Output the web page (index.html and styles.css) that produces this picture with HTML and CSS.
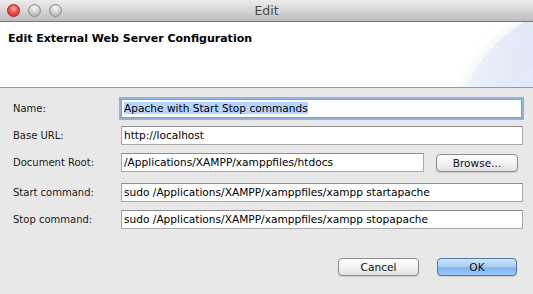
FILE: index.html
```html
<!DOCTYPE html>
<html lang="en">
<head>
    <meta charset="UTF-8">
    <title>Edit</title>
    <link rel="stylesheet" href="styles.css">
</head>
<body>
    <div class="window">
        <div class="titlebar">
            <div class="lights">
                <span class="light close"></span>
                <span class="light"></span>
                <span class="light"></span>
            </div>
            <div class="title">Edit</div>
        </div>

        <header class="banner">
            <h1>Edit External Web Server Configuration</h1>
        </header>

        <div class="content">
            <div class="row">
                <label class="label">Name:</label>
                <div class="field focused"><span class="selected">Apache with Start Stop commands</span></div>
            </div>
            <div class="row">
                <label class="label">Base URL:</label>
                <div class="field">http://localhost</div>
            </div>
            <div class="row row-wide">
                <label class="label">Document Root:</label>
                <div class="field">/Applications/XAMPP/xamppfiles/htdocs</div>
                <button class="btn browse">Browse...</button>
            </div>
            <div class="row row-after">
                <label class="label">Start command:</label>
                <div class="field">sudo /Applications/XAMPP/xamppfiles/xampp startapache</div>
            </div>
            <div class="row">
                <label class="label">Stop command:</label>
                <div class="field">sudo /Applications/XAMPP/xamppfiles/xampp stopapache</div>
            </div>

            <div class="actions">
                <button class="btn">Cancel</button>
                <button class="btn primary">OK</button>
            </div>
        </div>
    </div>
</body>
</html>
```

FILE: styles.css
```css
body {
    margin: 0;
    font-family: 'DejaVu Sans', 'Liberation Sans', sans-serif;
    color: #000;
}

.window {
    width: 533px;
    height: 294px;
    background: #e8e8e8;
    overflow: hidden;
}

/* title bar */
.titlebar {
    height: 21px;
    border-bottom: 1px solid #7a7a7a;
    background: linear-gradient(#ececec 0%, #d6d6d6 50%, #bdbdbd 100%);
    display: flex;
    align-items: center;
    position: relative;
}

.lights {
    display: flex;
    gap: 8px;
    padding-left: 7px;
}

.light {
    width: 13px;
    height: 13px;
    border-radius: 50%;
    border: 0.5px solid #8e8e8e;
    background: radial-gradient(circle at 50% 30%, #fbfbfb 0%, #d2d2d2 45%, #a9a9a9 100%);
    box-sizing: border-box;
}

.light.close {
    border-color: #a3262b;
    background: radial-gradient(circle at 50% 35%, #ffb3ad 0%, #f1514a 45%, #c9231f 100%);
}

.title {
    position: absolute;
    left: 0;
    right: 0;
    text-align: center;
    font-size: 12.5px;
    color: #4a4a4a;
    pointer-events: none;
}

/* banner */
.banner {
    position: relative;
    height: 66px;
    border-bottom: 1px solid #9a9a9a;
    background: #fff;
    box-sizing: border-box;
    padding: 10px 8px 0;
    overflow: hidden;
}

/* light blue swoosh in the corner */
.banner::before {
    content: "";
    position: absolute;
    left: 452px;
    top: -22px;
    width: 300px;
    height: 300px;
    border-radius: 50%;
    background: linear-gradient(100deg, #f4f7fc 0%, #e3eaf7 20%, #d9e3f4 45%);
    box-shadow: 0 0 10px 6px #f6f8fd;
}

.banner::after {
    content: "";
    position: absolute;
    left: 478px;
    top: 24px;
    width: 260px;
    height: 260px;
    border-radius: 50%;
    border-top: 1px solid rgba(255, 255, 255, 0.6);
}

h1 {
    position: relative;
    z-index: 1;
    margin: 0;
    font-size: 11px;
    font-weight: bold;
    line-height: 14px;
}

/* form */
.content {
    padding: 11px 10px 0 13px;
}

.row {
    display: flex;
    align-items: center;
    margin-bottom: 8px;
}

.row-wide {
    margin-top: 3px;
    margin-bottom: 11px;
}

.label {
    width: 108px;
    flex-shrink: 0;
    font-size: 10px;
    color: #1a1a1a;
}

.field {
    flex: 1;
    height: 19px;
    box-sizing: border-box;
    background: #fff;
    border: 1px solid #a8a8a8;
    border-top-color: #8e8e8e;
    font-size: 10.6px;
    line-height: 17px;
    padding-left: 2px;
    white-space: nowrap;
    overflow: hidden;
}

.field.focused {
    border-color: #7da2ce;
    box-shadow: 0 0 0 2px #8fb3de;
    margin-right: 1px;
}

.selected {
    background: #b5d5ff;
}

.btn {
    font-family: inherit;
    font-size: 10.6px;
    height: 18px;
    padding: 0;
    border: 1px solid #8c8c8c;
    border-radius: 4px;
    background: linear-gradient(#ffffff 0%, #f3f3f3 50%, #e4e4e4 100%);
    color: #111;
    box-shadow: 0 1px 1px rgba(0, 0, 0, 0.12);
}

.browse {
    width: 82px;
    margin-left: 12px;
    margin-right: 5px;
}

.actions {
    display: flex;
    justify-content: flex-end;
    gap: 18px;
    margin-top: 29px;
    padding-right: 6px;
}

.actions .btn {
    width: 81px;
}

.btn.primary {
    width: 80px;
    border-color: #4f78ad;
    background: linear-gradient(#d4e6fb 0%, #a6cbf5 50%, #7db5f0 55%, #9cc8f6 100%);
}
```
